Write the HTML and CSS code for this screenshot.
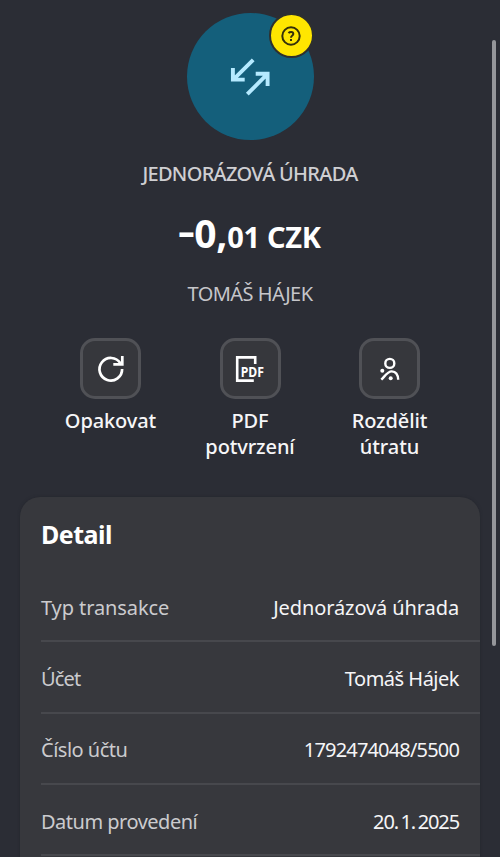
FILE: index.html
```html
<!DOCTYPE html>
<html lang="cs">
<head>
<meta charset="utf-8">
<title>Detail transakce</title>
<link rel="stylesheet" href="styles.css">
</head>
<body>
<main class="screen">
  <header class="summary">
    <div class="avatar">
      <svg class="avatar-icon" viewBox="0 0 40 38" fill="none" stroke="#b5eaff" stroke-width="3.9">
        <path d="M23.2 1.9 3.8 21.1M2.9 9.9V21.6H14.7"/>
        <path d="M17.3 36.2 37 16.4M25.7 15.7H37.6V28"/>
      </svg>
      <span class="badge">
        <svg viewBox="0 0 20 20" fill="none" stroke="#35300a" stroke-width="2">
          <circle cx="10" cy="10" r="8.7"/>
          <path d="M7.5 7.1C8.6 5.8 12.3 5.4 12.3 7.9 12.3 9.7 10 9.3 10 11.8"/>
          <path d="M10 13v2.1"/>
        </svg>
      </span>
    </div>
    <h1 class="kind">JEDNORÁZOVÁ ÚHRADA</h1>
    <p class="amount"><span class="minus">-</span><span class="whole">0,</span><span class="cents">01 CZK</span></p>
    <p class="person">TOMÁŠ HÁJEK</p>
  </header>

  <nav class="actions">
    <a class="action">
      <span class="tile">
        <svg viewBox="0 0 60 60" fill="none" stroke="#fff" stroke-width="2.7">
          <path d="M39.4 24.3A11.3 11.3 0 1 0 41.1 30"/>
          <path d="M41.3 17V25.4H32.3"/>
        </svg>
      </span>
      <span class="label repeat">Opakovat</span>
    </a>
    <a class="action">
      <span class="tile">
        <svg viewBox="0 0 60 60" fill="none" stroke="#fff" stroke-width="2.6">
          <path d="M35.2 25V18.4H17.2V41.6H33.8"/>
          <text class="pdf-text" x="20.8" y="37.6" textLength="23.2" lengthAdjust="spacingAndGlyphs">PDF</text>
        </svg>
      </span>
      <span class="label">PDF<br>potvrzení</span>
    </a>
    <a class="action">
      <span class="tile">
        <svg viewBox="0 0 60 60" fill="none" stroke="#fff" stroke-width="2.4">
          <circle cx="29.8" cy="24.4" r="4.5"/>
          <path d="M21.3 40.7C24.5 37.7 27.8 32.2 31.8 32.4 35.7 32.6 38 36 38.2 40.7"/>
          <circle class="dot" cx="22.3" cy="31.7" r="2"/>
          <circle class="dot" cx="30.7" cy="39.3" r="2"/>
        </svg>
      </span>
      <span class="label split">Rozdělit<br>útratu</span>
    </a>
  </nav>

  <section class="card">
    <h2 class="title">Detail</h2>
    <dl class="rows">
      <div class="row"><dt class="type">Typ transakce</dt><dd class="type">Jednorázová úhrada</dd></div>
      <div class="row"><dt class="account">Účet</dt><dd>Tomáš Hájek</dd></div>
      <div class="row"><dt>Číslo účtu</dt><dd class="number">1792474048/5500</dd></div>
      <div class="row"><dt>Datum provedení</dt><dd class="date">20.<i></i>1.<i></i>2025</dd></div>
    </dl>
  </section>
</main>
<div class="scrollbar"></div>
</body>
</html>
```
FILE: styles.css
```css
* { box-sizing: border-box; margin: 0; padding: 0; }
html, body { height: 857px; overflow: hidden; background: #2b2d35; }
body { font-family: "Noto Sans", "Open Sans", sans-serif; color: #fff; position: relative; }
.screen { padding: 13px 20px 0; height: 857px; overflow: hidden; }
.summary { display: flex; flex-direction: column; align-items: center; }
.avatar { position: relative; width: 127px; height: 127px; border-radius: 50%; background: #145f7b; }
.avatar-icon { display: block; width: 40px; height: 38px; margin: 44.5px 0 0 43.5px; }
.badge { position: absolute; left: 82px; top: 0; width: 45px; height: 45px; border-radius: 50%; border: 2px solid #2e302e; background: #ffe600; display: flex; align-items: center; justify-content: center; }
.badge svg { width: 20px; height: 20px; }
.kind { margin-top: 21px; font-size: 20px; line-height: 26px; font-weight: 500; color: #cfcfd2; letter-spacing: -0.7px; }
.amount { margin-top: 19px; height: 54px; line-height: 54px; font-weight: 700; white-space: nowrap; display: flex; align-items: baseline; }
.minus { width: 15px; font-size: 39px; text-align: center; transform: translateY(-3px) scale(1.35, 0.9); }
.whole { font-size: 39px; letter-spacing: -0.2px; }
.cents { font-size: 29px; letter-spacing: -0.3px; }
.person { margin-top: 21px; font-size: 20px; line-height: 26px; color: #c6c6ca; letter-spacing: -0.55px; }
.actions { display: grid; grid-template-columns: repeat(3, 139.5px); justify-content: center; margin-top: 31px; height: 127px; }
.action { display: flex; flex-direction: column; align-items: center; }
.tile { width: 61px; height: 61px; border: 3px solid #505156; border-radius: 15px; background: #36373c; display: flex; align-items: center; justify-content: center; }
.tile svg { width: 60px; height: 60px; flex: none; }
.pdf-text { font-size: 14px; font-weight: 700; fill: #fff; stroke: none; }
.dot { fill: #fff; stroke: none; }
.label { margin-top: 9px; font-size: 20px; line-height: 26px; font-weight: 500; text-align: center; color: #f6f6f8; letter-spacing: -0.1px; }
.card { margin-top: 32px; width: 460px; height: 400px; border-radius: 20px; background: #37383d; box-shadow: 0 0 3px #24262d; padding: 19px 0 0 21px; }
.title { font-size: 25px; line-height: 36px; font-weight: 700; letter-spacing: -0.5px; }
.rows { margin-top: 19px; }
.row { height: 71.3px; padding: 4px 21px 0 0; display: flex; justify-content: space-between; align-items: center; border-bottom: 2px solid #47484d; font-size: 20px; line-height: 28px; letter-spacing: -0.5px; }
dt { color: #cbcbce; }
dd { color: #f5f5f7; }
.type { letter-spacing: -0.1px; }
.account { letter-spacing: -0.8px; }
.number { letter-spacing: -0.83px; }
.date { letter-spacing: -1.1px; }
.date i { display: inline-block; width: 2.5px; }
.scrollbar { position: absolute; left: 492px; top: 40px; width: 4px; height: 606px; border-radius: 2px; background: #95969a; }
```
